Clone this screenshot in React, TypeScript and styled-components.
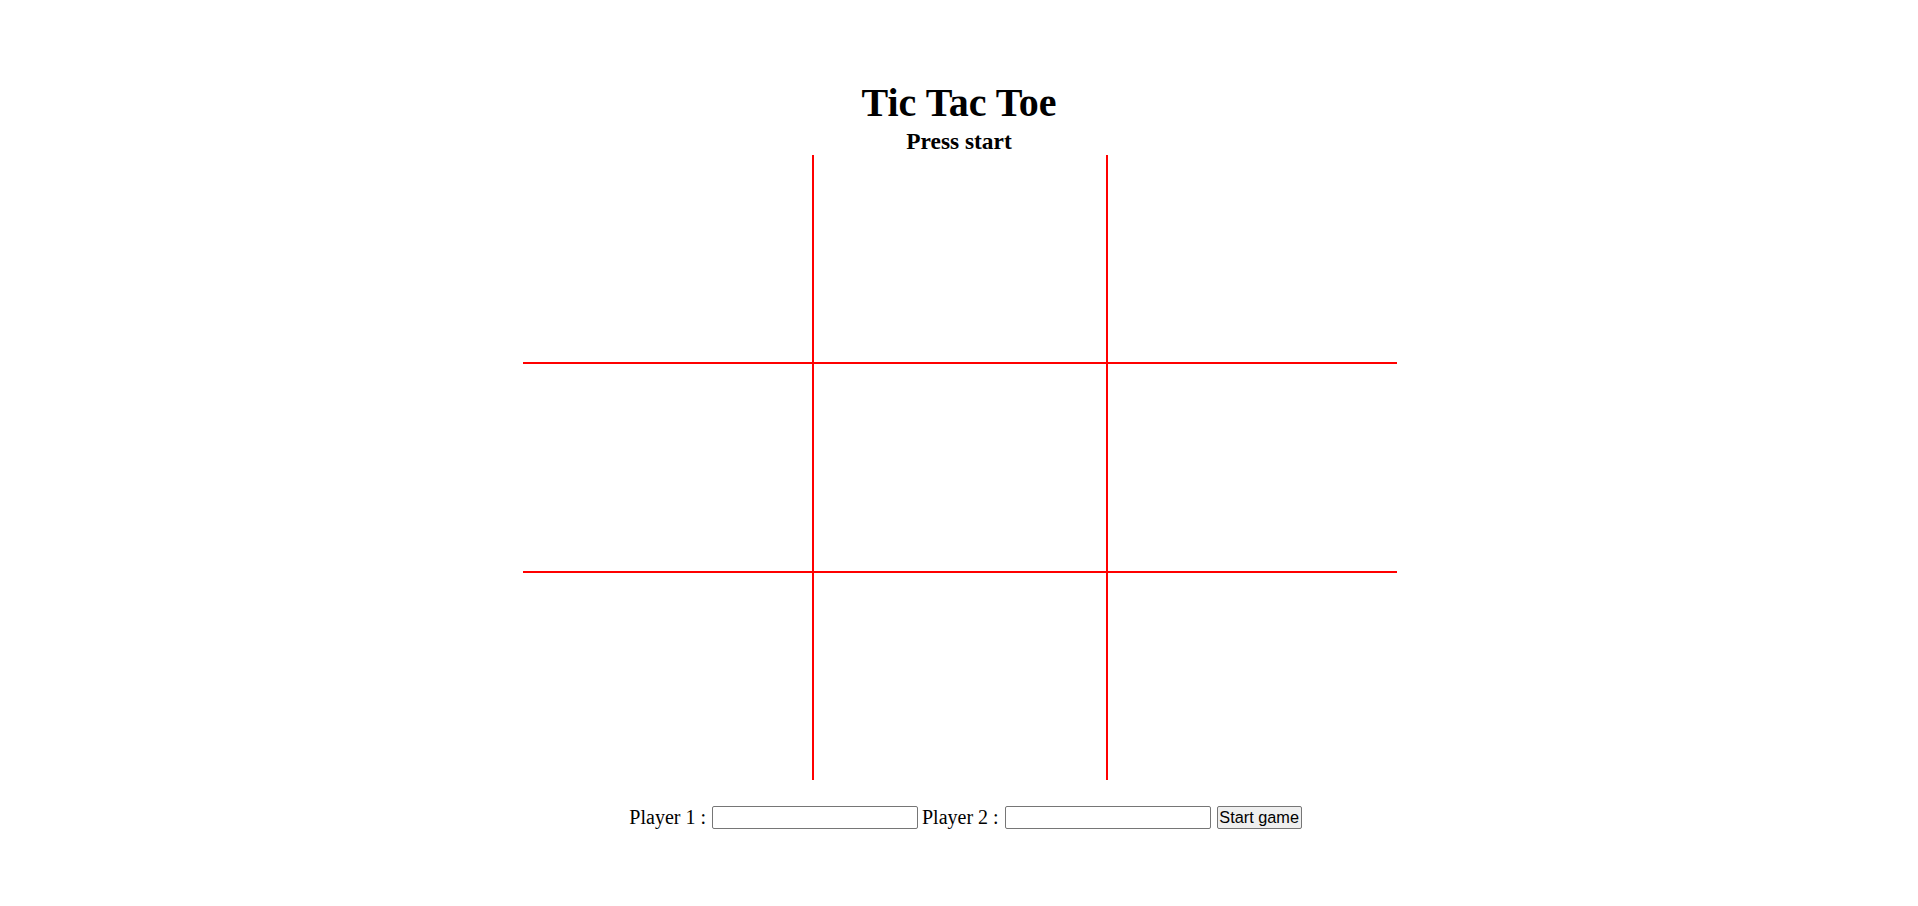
import React from "react";
import styled, { createGlobalStyle } from "styled-components";

const GlobalStyle = createGlobalStyle`
  html, body { margin: 0; padding: 0; background: #ffffff; }
  body { font-family: "Liberation Serif", "Times New Roman", serif; color: #000; }
`;

const Page = styled.div`
  display: flex;
  flex-direction: column;
  align-items: center;
  padding-top: 81px;
  width: 1918px;
`;

const Title = styled.h1`
  margin: 0;
  font-size: 40px;
  line-height: 44px;
  font-weight: bold;
  text-align: center;
`;

const Status = styled.h3`
  margin: 3px 0 0;
  font-size: 23.4px;
  line-height: 27px;
  font-weight: bold;
  text-align: center;
`;

const Board = styled.div`
  display: grid;
  grid-template-columns: 291px 294px 289px;
  grid-template-rows: 209px 209px 207px;
  margin-left: 2px;
`;

const Cell = styled.div<{ $right: boolean; $bottom: boolean }>`
  box-sizing: border-box;
  border-right: ${(p) => (p.$right ? "2px solid #ff0000" : "none")};
  border-bottom: ${(p) => (p.$bottom ? "2px solid #ff0000" : "none")};
`;

const Controls = styled.div`
  display: flex;
  align-items: center;
  margin-top: 26px;
  margin-left: 13px;
  font-size: 20px;
  line-height: 23px;
`;

const Label = styled.span`
  white-space: pre;
`;

const NameInput = styled.input`
  box-sizing: border-box;
  width: 206px;
  height: 23px;
  margin: 0 4px 0 6px;
  padding: 1px 2px;
  border: 1px solid #767676;
  border-radius: 2px;
  font-family: "Liberation Sans", Arial, sans-serif;
  font-size: 13.33px;
  background: #fff;
`;

const StartButton = styled.button`
  box-sizing: border-box;
  height: 23px;
  width: 85px;
  margin-left: 2px;
  padding: 0 1px;
  border: 1px solid #767676;
  border-radius: 2px;
  background: #efefef;
  font-family: "Liberation Sans", Arial, sans-serif;
  font-size: 16.3px;
  color: #000;
  line-height: 21px;
  white-space: nowrap;
`;

export default function App() {
  const cells = Array.from({ length: 9 }, (_, i) => i);
  return (
    <>
      <GlobalStyle />
      <Page>
        <Title>Tic Tac Toe</Title>
        <Status>Press start</Status>
        <Board>
          {cells.map((i) => (
            <Cell key={i} $right={i % 3 !== 2} $bottom={i < 6} />
          ))}
        </Board>
        <Controls>
          <Label>Player 1 :</Label>
          <NameInput type="text" />
          <Label>Player 2 :</Label>
          <NameInput type="text" />
          <StartButton>Start game</StartButton>
        </Controls>
      </Page>
    </>
  );
}
